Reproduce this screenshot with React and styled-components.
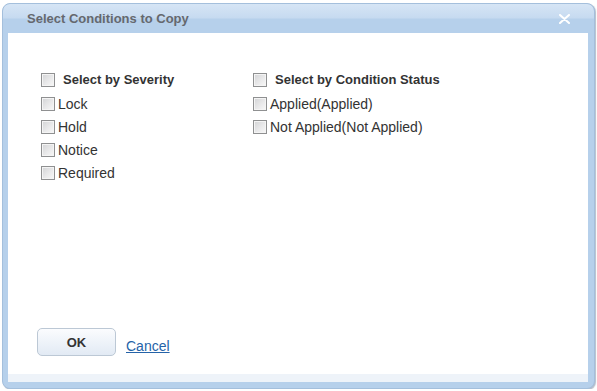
import React from 'react';
import styled, { createGlobalStyle } from 'styled-components';

const GlobalStyle = createGlobalStyle`
  html, body {
    margin: 0;
    padding: 0;
    background: #ffffff;
  }
  body {
    font-family: "Liberation Sans", Arial, sans-serif;
  }
`;

const Dialog = styled.div`
  box-sizing: border-box;
  width: 593px;
  height: 386px;
  margin: 3px 0 0 2px;
  display: flex;
  flex-direction: column;
  background: #b6d0eb;
  border: 1px solid #a4bfdc;
  border-radius: 8px;
  box-shadow: 1px 1px 1px rgba(90, 110, 140, 0.45);
  overflow: hidden;
`;

const TitleBar = styled.div`
  height: 29px;
  flex: none;
  display: flex;
  align-items: center;
  justify-content: space-between;
  padding: 0 24px 0 24px;
  background: linear-gradient(#d6e5f5 0%, #c6daf0 48%, #b6d0eb 52%, #b6d0eb 100%);
  border-radius: 7px 7px 0 0;
`;

const Title = styled.span`
  font-size: 13px;
  font-weight: bold;
  color: #65686e;
`;

const CloseIcon = () => (
  <svg width="11" height="10" viewBox="0 0 11 10">
    <path d="M1 1 L10 9 M10 1 L1 9" stroke="#ffffff" strokeWidth="2" strokeLinecap="round" />
  </svg>
);

const Frame = styled.div`
  flex: 1;
  display: flex;
  flex-direction: column;
  padding: 0 6px 6px 5px;
`;

const Body = styled.div`
  flex: 1;
  display: flex;
  flex-direction: column;
  background: #ffffff;
`;

const Content = styled.div`
  flex: 1;
  display: flex;
  padding: 39px 0 0 33px;
`;

const Column = styled.div`
  width: ${props => props.width}px;
  display: flex;
  flex-direction: column;
`;

const Row = styled.label`
  height: ${props => (props.header ? 24 : 23)}px;
  display: flex;
  align-items: flex-start;
  gap: ${props => (props.header ? 8 : 3)}px;
  font-size: ${props => (props.header ? 13 : 14)}px;
  font-weight: ${props => (props.header ? 'bold' : 'normal')};
  color: #333333;
  line-height: 16px;
`;

const Box = styled.input.attrs({ type: 'checkbox' })`
  appearance: none;
  margin: 1px 0 0 0;
  width: 14px;
  height: 14px;
  flex: none;
  box-sizing: border-box;
  border: 1px solid #8f9091;
  background: linear-gradient(135deg, #d2d3d5 0%, #e9e9ea 55%, #f8f8f8 100%);
  box-shadow: inset 0 0 0 1px #f4f4f4;
`;

const Actions = styled.div`
  display: flex;
  align-items: flex-end;
  gap: 10px;
  padding: 0 0 18px 29px;
`;

const OkButton = styled.button`
  width: 79px;
  height: 28px;
  border: 1px solid #bcc8d5;
  border-radius: 5px;
  background: linear-gradient(#fbfcfe 0%, #eef3f9 50%, #e2eaf4 100%);
  font-family: "Liberation Sans", Arial, sans-serif;
  font-size: 13px;
  font-weight: bold;
  color: #333333;
  padding: 0;
`;

const CancelLink = styled.a`
  font-size: 14px;
  color: #2563a8;
  text-decoration: underline;
  padding-bottom: 2px;
  cursor: pointer;
`;

const FooterStrip = styled.div`
  height: 8px;
  flex: none;
  background: #eef3f9;
`;

const severity = ['Lock', 'Hold', 'Notice', 'Required'];
const statuses = ['Applied(Applied)', 'Not Applied(Not Applied)'];

export default function App() {
  return (
    <>
      <GlobalStyle />
      <Dialog>
        <TitleBar>
          <Title>Select Conditions to Copy</Title>
          <CloseIcon />
        </TitleBar>
        <Frame>
          <Body>
            <Content>
              <Column width={212}>
                <Row header>
                  <Box />
                  Select by Severity
                </Row>
                {severity.map(item => (
                  <Row key={item}>
                    <Box />
                    {item}
                  </Row>
                ))}
              </Column>
              <Column width={300}>
                <Row header>
                  <Box />
                  Select by Condition Status
                </Row>
                {statuses.map(item => (
                  <Row key={item}>
                    <Box />
                    {item}
                  </Row>
                ))}
              </Column>
            </Content>
            <Actions>
              <OkButton>OK</OkButton>
              <CancelLink>Cancel</CancelLink>
            </Actions>
            <FooterStrip />
          </Body>
        </Frame>
      </Dialog>
    </>
  );
}
